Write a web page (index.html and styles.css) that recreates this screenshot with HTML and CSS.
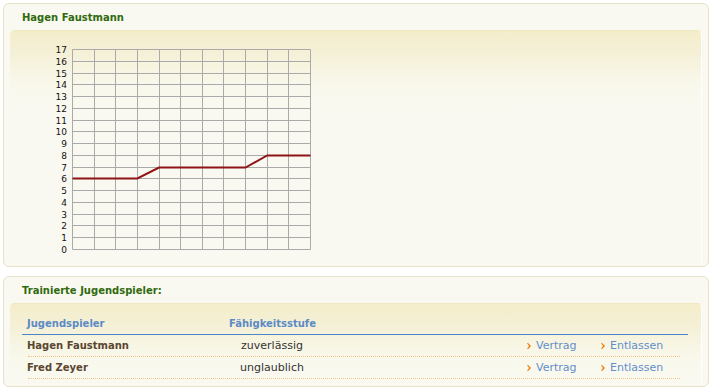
FILE: index.html
```html
<!DOCTYPE html>
<html lang="de">
<head>
    <meta charset="UTF-8">
    <title>Jugendspieler</title>
    <link rel="stylesheet" href="styles.css">
</head>
<body>
    <div class="box">
        <h2 class="box-title">Hagen Faustmann</h2>
        <div class="box-inner chart-inner">
            <svg class="chart" width="280" height="220" viewBox="0 0 280 220">
                <g class="grid" id="grid"></g>
                <g class="labels" id="labels"></g>
                <polyline class="line" id="line" points=""></polyline>
            </svg>
        </div>
    </div>

    <div class="box">
        <h2 class="box-title">Trainierte Jugendspieler:</h2>
        <div class="box-inner table-inner">
            <div class="thead">
                <span>Jugendspieler</span>
                <span>Fähigkeitsstufe</span>
            </div>
            <div class="row">
                <span class="name">Hagen Faustmann</span>
                <span class="skill">zuverlässig</span>
                <span></span>
                <a class="link" href="#"><svg class="arrow" width="4" height="6" viewBox="0 0 4 6"><path d="M0 0h1l3 3-3 3H0l2-3z"/></svg>Vertrag</a>
                <a class="link" href="#"><svg class="arrow" width="4" height="6" viewBox="0 0 4 6"><path d="M0 0h1l3 3-3 3H0l2-3z"/></svg>Entlassen</a>
            </div>
            <div class="row">
                <span class="name">Fred Zeyer</span>
                <span class="skill">unglaublich</span>
                <span></span>
                <a class="link" href="#"><svg class="arrow" width="4" height="6" viewBox="0 0 4 6"><path d="M0 0h1l3 3-3 3H0l2-3z"/></svg>Vertrag</a>
                <a class="link" href="#"><svg class="arrow" width="4" height="6" viewBox="0 0 4 6"><path d="M0 0h1l3 3-3 3H0l2-3z"/></svg>Entlassen</a>
            </div>
        </div>
    </div>

    <script>
        // Verlauf der Fähigkeitsstufe
        const werte = [6, 6, 6, 6, 7, 7, 7, 7, 7, 8, 8, 8];
        const maxWert = 17;
        const gLeft = 32, gRight = 270, gTop = 9, gBottom = 209;
        const ns = 'http://www.w3.org/2000/svg';
        const grid = document.getElementById('grid');
        const labels = document.getElementById('labels');
        const colW = (gRight - gLeft) / (werte.length - 1);
        const rowH = (gBottom - gTop) / maxWert;

        for (let i = 0; i < werte.length; i++) {
            const x = Math.round(gLeft + i * colW) + 0.5;
            const l = document.createElementNS(ns, 'line');
            l.setAttribute('x1', x); l.setAttribute('x2', x);
            l.setAttribute('y1', gTop + 0.5); l.setAttribute('y2', gBottom + 0.5);
            grid.appendChild(l);
        }
        for (let v = 0; v <= maxWert; v++) {
            const y = Math.round(gBottom - v * rowH) + 0.5;
            const l = document.createElementNS(ns, 'line');
            l.setAttribute('x1', gLeft + 0.5); l.setAttribute('x2', gRight + 0.5);
            l.setAttribute('y1', y); l.setAttribute('y2', y);
            grid.appendChild(l);
            const t = document.createElementNS(ns, 'text');
            t.setAttribute('x', 27);
            t.setAttribute('y', y + 3);
            t.textContent = v;
            labels.appendChild(t);
        }
        const pts = werte.map((w, i) => (gLeft + 0.5 + i * colW).toFixed(1) + ',' + (Math.round(gBottom - w * rowH) + 0.5));
        document.getElementById('line').setAttribute('points', pts.join(' '));
    </script>
</body>
</html>
```

FILE: styles.css
```css
body {
    margin: 0;
    padding: 3px;
    background: #fff;
    font-family: 'DejaVu Sans', Verdana, sans-serif;
    font-size: 10px;
}

.box {
    background: #faf9f1;
    border: 1px solid #e7e3cb;
    border-radius: 6px;
    margin-bottom: 9px;
}

.box-title {
    margin: 0;
    height: 26px;
    line-height: 27px;
    padding-left: 18px;
    font-size: 10px;
    font-weight: bold;
    color: #2f6a0e;
}

.box-inner {
    margin: 0 6px;
    border-radius: 5px 5px 0 0;
    border-top: 1px solid #efe8bf;
    border-right: 1px solid #fff;
    background: linear-gradient(#f3edca 0, #f5f1d9 25px, #f9f8ec 55px, #faf9f1 80px);
}

.chart-inner {
    height: 226px;
    padding: 9px 0 0 30px;
}

.chart {
    display: block;
}

.grid line {
    stroke: #aaa;
    stroke-width: 1;
}

.labels text {
    font-family: 'DejaVu Sans', Verdana, sans-serif;
    font-size: 9px;
    fill: #111;
    text-anchor: end;
}

.line {
    fill: none;
    stroke: #8e1515;
    stroke-width: 2;
}

.table-inner {
    padding: 10px 13px 7px 12px;
}

.thead {
    display: grid;
    grid-template-columns: 202px 96px 1fr;
    height: 20px;
    line-height: 20px;
    border-bottom: 1px solid #4a86c8;
    font-weight: bold;
    color: #5b8ac6;
}

.thead span {
    padding-left: 5px;
}

.row {
    display: grid;
    grid-template-columns: 196px 96px 1fr 74px 79px;
    margin: 0 8px 0 6px;
    height: 21px;
    line-height: 22px;
    border-bottom: 1px dotted #efc58c;
}

.name {
    font-weight: bold;
    color: #5a4630;
    margin-left: -1px;
}

.skill {
    text-align: center;
    color: #333;
    font-size: 11px;
}

.link {
    color: #628fca;
    text-decoration: none;
    display: flex;
    align-items: center;
    gap: 5px;
    font-size: 11px;
}

.arrow {
    fill: #f07a00;
}
```
